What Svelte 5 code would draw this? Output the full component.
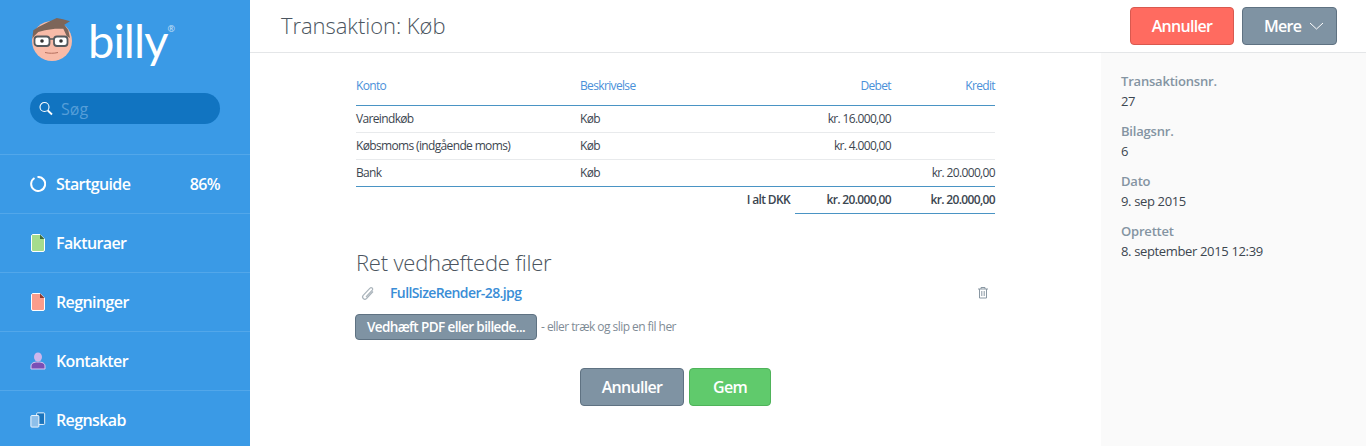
<script>
  const nav = [
    { label: "Startguide", icon: "ring", value: "86%" },
    { label: "Fakturaer", icon: "invoice" },
    { label: "Regninger", icon: "bill" },
    { label: "Kontakter", icon: "contact" },
    { label: "Regnskab", icon: "books" }
  ];
  const lines = [
    { account: "Vareindkøb", text: "Køb", debit: "kr. 16.000,00", credit: "" },
    { account: "Købsmoms (indgående moms)", text: "Køb", debit: "kr. 4.000,00", credit: "" },
    { account: "Bank", text: "Køb", debit: "", credit: "kr. 20.000,00" }
  ];
  const meta = [
    ["Transaktionsnr.", "27"],
    ["Bilagsnr.", "6"],
    ["Dato", "9. sep 2015"],
    ["Oprettet", "8. september 2015 12:39"]
  ];
</script>

<div class="page">
  <aside class="sidebar">
    <div class="brand">
      <svg class="face" width="44" height="44" viewBox="0 0 44 44">
        <circle cx="21" cy="23" r="20" fill="#f8bba8" />
        <path d="M1.300 20.700 2.300 12.300 7.300 9 17.300 4 25.700 0 32 1.300 39 3.300 33.300 6.700 37.300 12.300 39 20 35.700 18 32.300 10.700 24 10.700 14 12.300 7.300 14 3.300 18Z" fill="#7d6559" />
        <rect x="3.500" y="18.500" width="15" height="9.500" rx="3" fill="#fff" stroke="#555a5e" stroke-width="1.800" />
        <rect x="23" y="18.500" width="13.500" height="9.500" rx="3" fill="#fff" stroke="#555a5e" stroke-width="1.800" />
        <path d="M18.500 21h4.500" stroke="#555a5e" stroke-width="1.500" />
        <circle cx="11" cy="23" r="1.800" fill="#333" />
        <circle cx="30" cy="23" r="1.800" fill="#333" />
        <path d="M14 34.500c4 1 9 1 13 0" fill="none" stroke="#b5705f" stroke-width="1" />
      </svg>
      <span class="wordmark">billy</span><span class="reg">®</span>
    </div>
    <div class="search">
      <svg width="14" height="15" viewBox="0 0 14 15">
        <circle cx="5.500" cy="6" r="4.500" fill="none" stroke="#fff" stroke-width="1.100" />
        <path d="M8.800 9.500l4.200 4" stroke="#fff" stroke-width="1.800" />
      </svg>
      <span>Søg</span>
    </div>
    <nav>
      {#each nav as item}
        <div class="nav-item">
          <span class="nav-icon">
            {#if item.icon === "ring"}
              <svg width="16" height="16" viewBox="0 0 16 16">
                <path d="M4.500 2A7 7 0 1 0 7.500 1" fill="none" stroke="#fff" stroke-width="2" />
              </svg>
            {:else if item.icon === "invoice"}
              <svg width="14" height="18" viewBox="0 0 14 18">
                <path d="M1.500.500H9L13.500 5V16a1.500 1.500 0 0 1-1.500 1.500H2A1.500 1.500 0 0 1 .500 16V1.500Z" fill="#a5dc8e" stroke="#fff" />
                <path d="M9 .500V5h4.500Z" fill="#3d6b3a" />
              </svg>
            {:else if item.icon === "bill"}
              <svg width="14" height="18" viewBox="0 0 14 18">
                <path d="M1.500.500H9L13.500 5V16a1.500 1.500 0 0 1-1.500 1.500H2A1.500 1.500 0 0 1 .500 16V1.500Z" fill="#fb9d8c" stroke="#fff" />
                <path d="M9 .500V5h4.500Z" fill="#8a3a30" />
              </svg>
            {:else if item.icon === "contact"}
              <svg width="16" height="18" viewBox="0 0 16 18">
                <path d="M1 17v-3c0-3 3-4 7-4s7 1 7 4v3Z" fill="#7a4fb5" stroke="#d9c8f2" />
                <ellipse cx="8" cy="5" rx="4" ry="4.500" fill="#cdb6ec" />
              </svg>
            {:else}
              <svg width="18" height="18" viewBox="0 0 18 18">
                <rect x="7.500" y="1" width="9" height="13" rx="1" fill="#1a74bd" stroke="#fff" />
                <rect x="1" y="4" width="9" height="13" rx="1" fill="#8dbfea" stroke="#fff" />
              </svg>
            {/if}
          </span>
          <span class="nav-label">{item.label}</span>
          {#if item.value}<span class="nav-value">{item.value}</span>{/if}
        </div>
      {/each}
    </nav>
  </aside>

  <div class="main">
    <header>
      <h1>Transaktion: Køb</h1>
      <div class="actions">
        <button class="btn danger big">Annuller</button>
        <button class="btn slate big more">
          Mere
          <svg width="15" height="8" viewBox="0 0 15 8"><path d="M1 1l6.500 6L14 1" fill="none" stroke="#fff" /></svg>
        </button>
      </div>
    </header>

    <div class="body">
      <section class="content">
        <table>
          <thead>
            <tr>
              <th class="c-account">Konto</th>
              <th class="c-text">Beskrivelse</th>
              <th class="num c-debit">Debet</th>
              <th class="num">Kredit</th>
            </tr>
          </thead>
          <tbody>
            {#each lines as line}
              <tr>
                <td>{line.account}</td>
                <td>{line.text}</td>
                <td class="num">{line.debit}</td>
                <td class="num">{line.credit}</td>
              </tr>
            {/each}
          </tbody>
          <tfoot>
            <tr>
              <td colspan="2" class="num total-label">I alt DKK</td>
              <td class="num total">kr. 20.000,00</td>
              <td class="num total">kr. 20.000,00</td>
            </tr>
          </tfoot>
        </table>

        <h2>Ret vedhæftede filer</h2>
        <div class="file">
          <svg width="16" height="16" viewBox="0 0 16 16">
            <path d="M13 5.500 6.500 12.500a2.300 2.300 0 0 1-3.300-3.200L10 2.200a1.500 1.500 0 0 1 2.300 2L6 10.800" fill="none" stroke="#aab4bb" stroke-width="1.200" transform="translate(0 1)" />
          </svg>
          <a href="#file">FullSizeRender-28.jpg</a>
          <svg class="trash" width="12" height="13" viewBox="0 0 12 13">
            <path d="M1 3h10M4 3V1.500h4V3M2.500 3v9h7V3M4.800 5v5M7.200 5v5" fill="none" stroke="#8a98a3" />
          </svg>
        </div>
        <div class="upload">
          <button class="btn slate small">Vedhæft PDF eller billede...</button>
          <span>- eller træk og slip en fil her</span>
        </div>
        <div class="form-actions">
          <button class="btn slate big">Annuller</button>
          <button class="btn success big">Gem</button>
        </div>
      </section>

      <aside class="details">
        {#each meta as [label, value]}
          <div class="detail">
            <div class="detail-label">{label}</div>
            <div class="detail-value">{value}</div>
          </div>
        {/each}
      </aside>
    </div>
  </div>
</div>

<style>
  :global(body) {
    margin: 0;
    overflow: hidden;
  }

  .page {
    display: flex;
    height: 446px;
    overflow: hidden;
    font-family: "Open Sans", "Noto Sans", sans-serif;
    color: #3c4650;
  }

  .sidebar {
    flex: 0 0 250px;
    background: #3a9ae6;
    color: #fff;
  }

  .brand {
    display: flex;
    align-items: flex-start;
    height: 93px;
    padding-left: 31px;
    box-sizing: border-box;
  }

  .face {
    margin-top: 18px;
  }

  .wordmark {
    margin: 11px 0 0 13px;
    font-family: Lato, sans-serif;
    font-weight: 400;
    font-size: 47px;
    line-height: 58px;
    letter-spacing: -0.9px;
  }

  .reg {
    margin: 24px 0 0 0;
    font-size: 9px;
    line-height: 10px;
    opacity: 0.7;
  }

  .search {
    display: flex;
    align-items: center;
    gap: 8px;
    height: 31px;
    margin: 0 30px 30px;
    padding-left: 9px;
    background: #1174c1;
    border-radius: 16px;
    font-size: 16px;
    color: #559ed8;
  }

  .nav-item {
    display: flex;
    align-items: center;
    height: 58px;
    padding: 0 30px;
    border-top: 1px solid #52a7ea;
    font-size: 16px;
    font-weight: 600;
    letter-spacing: -0.6px;
  }

  .nav-icon {
    display: flex;
    justify-content: center;
    align-items: center;
    width: 16px;
    margin-right: 10px;
  }

  .nav-value {
    margin-left: auto;
  }

  .main {
    flex: 1;
    display: flex;
    flex-direction: column;
    min-width: 0;
  }

  header {
    display: flex;
    align-items: center;
    justify-content: space-between;
    height: 52px;
    padding: 0 29px 0 31px;
    border-bottom: 1px solid #e4e6e8;
    flex: none;
  }

  h1 {
    margin: 0 0 2px;
    font-size: 22px;
    font-weight: 300;
    letter-spacing: -0.05px;
    color: #4b5560;
  }

  .actions {
    display: flex;
    gap: 8px;
  }

  .btn {
    box-sizing: border-box;
    border-radius: 4px;
    color: #fff;
    font-family: inherit;
    font-weight: 600;
    letter-spacing: -0.7px;
    padding: 0;
  }

  .big {
    height: 38px;
    font-size: 16px;
  }

  .danger {
    width: 104px;
    background: #ff6b60;
    border: 1px solid #d9594f;
  }

  .slate {
    background: #7f93a3;
    border: 1px solid #5f7282;
  }

  .more {
    display: flex;
    align-items: center;
    gap: 8px;
    width: 95px;
    padding-left: 21px;
  }

  .success {
    width: 82px;
    background: #60ca6c;
    border: 1px solid #4fb35a;
  }

  .body {
    flex: 1;
    display: flex;
    min-height: 0;
  }

  .content {
    flex: 1;
    padding: 0 106px;
    min-width: 0;
  }

  table {
    width: 100%;
    border-collapse: collapse;
    table-layout: fixed;
    font-size: 12px;
    letter-spacing: -0.65px;
  }

  th {
    height: 52px;
    padding: 14px 0 0;
    box-sizing: border-box;
    font-weight: 400;
    text-align: left;
    color: #4a90d9;
    border-bottom: 1px solid #4a94c4;
  }

  td {
    height: 27px;
    padding: 0;
    box-sizing: border-box;
    border-bottom: 1px solid #e8eaec;
  }

  .c-account {
    width: 224px;
  }

  .c-text {
    width: 215px;
  }

  .c-debit {
    width: 96px;
  }

  th.num,
  td.num {
    text-align: right;
  }

  tbody tr:last-child td {
    border-bottom: 1px solid #4a94c4;
  }

  tfoot td {
    font-weight: 600;
    border-bottom: none;
  }

  .total-label {
    padding-right: 5px;
  }

  td.total {
    border-bottom: 1px solid #4a94c4;
  }

  h2 {
    margin: 34px 0 0;
    font-size: 22px;
    line-height: 28px;
    font-weight: 300;
    letter-spacing: -0.2px;
    color: #4b5560;
  }

  .file {
    display: flex;
    align-items: center;
    height: 24px;
    margin-top: 5px;
    padding-left: 4px;
    font-size: 14px;
  }

  .file a {
    margin-left: 14px;
    color: #3a8dd6;
    font-weight: 600;
    letter-spacing: -0.6px;
    text-decoration: none;
  }

  .trash {
    margin-left: auto;
    margin-right: 6px;
  }

  .upload {
    display: flex;
    align-items: center;
    gap: 4px;
    margin-top: 9px;
    font-size: 12px;
    letter-spacing: -0.55px;
    color: #7f8c96;
  }

  .small {
    width: 182px;
    height: 26px;
    margin-left: -1px;
    font-size: 13.500px;
    letter-spacing: -0.6px;
  }

  .form-actions {
    display: flex;
    justify-content: center;
    gap: 5px;
    margin-top: 28px;
  }

  .form-actions .slate {
    width: 104px;
  }

  .details {
    flex: 0 0 265px;
    box-sizing: border-box;
    padding: 18px 20px 0;
    background: #fafafa;
  }

  .detail {
    height: 50px;
    font-size: 13px;
    line-height: 20px;
    letter-spacing: -0.35px;
  }

  .detail-label {
    font-weight: 600;
    letter-spacing: -0.2px;
    color: #8494a2;
  }

  .detail-value {
    color: #3c4650;
  }
</style>
